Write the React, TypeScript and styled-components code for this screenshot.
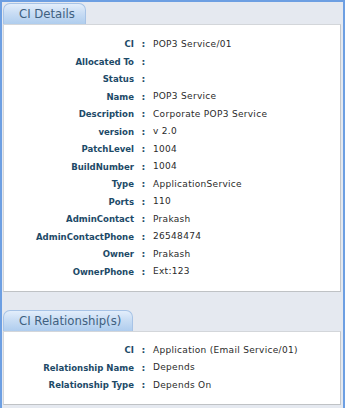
import * as React from 'react';
import styled, {createGlobalStyle} from 'styled-components';

const GlobalStyle = createGlobalStyle`
  html, body {
    margin: 0;
    padding: 0;
    background: #ffffff;
  }
`;

type Field = {label: string; value: string};

const details: Field[] = [
  {label: 'CI', value: 'POP3 Service/01'},
  {label: 'Allocated To', value: ''},
  {label: 'Status', value: ''},
  {label: 'Name', value: 'POP3 Service'},
  {label: 'Description', value: 'Corporate POP3 Service'},
  {label: 'version', value: 'v 2.0'},
  {label: 'PatchLevel', value: '1004'},
  {label: 'BuildNumber', value: '1004'},
  {label: 'Type', value: 'ApplicationService'},
  {label: 'Ports', value: '110'},
  {label: 'AdminContact', value: 'Prakash'},
  {label: 'AdminContactPhone', value: '26548474'},
  {label: 'Owner', value: 'Prakash'},
  {label: 'OwnerPhone', value: 'Ext:123'},
];

const relationships: Field[] = [
  {label: 'CI', value: 'Application (Email Service/01)'},
  {label: 'Relationship Name', value: 'Depends'},
  {label: 'Relationship Type', value: 'Depends On'},
];

const Frame = styled.div`
  box-sizing: border-box;
  width: 345px;
  height: 408px;
  background: #e5e9f0;
  border: 2px solid #6d9fe2;
  border-bottom: none;
  padding: 1px 1px 0 1px;
  display: flex;
  flex-direction: column;
  font-family: 'DejaVu Sans', Verdana, sans-serif;
`;

const Section = styled.section<{$gap?: number}>`
  display: flex;
  flex-direction: column;
  margin-top: ${({$gap}) => $gap ?? 0}px;
`;

const Tab = styled.div<{$width: number}>`
  box-sizing: border-box;
  width: ${({$width}) => $width}px;
  height: 21px;
  border: 1px solid #a7c3e6;
  border-bottom: none;
  border-radius: 7px 7px 0 0;
  background: linear-gradient(#e3eefb 0%, #c9ddf4 45%, #afcdee 100%);
  color: #3f607f;
  font-size: 11.7px;
  line-height: 21px;
  padding-left: 15px;
  white-space: nowrap;
`;

const Panel = styled.div<{$top: number; $bottom: number}>`
  background: #ffffff;
  border: 1px solid #d3d6da;
  border-right-color: #c4c7cb;
  border-bottom-color: #bfc2c5;
  margin-right: 1px;
  padding: ${({$top}) => $top}px 0 ${({$bottom}) => $bottom}px 0;
  display: grid;
  grid-template-columns: 130px 19px 1fr;
  grid-auto-rows: 17.5px;
  align-items: center;
`;

const Label = styled.div`
  text-align: right;
  font-family: 'DejaVu Sans Condensed', 'DejaVu Sans', sans-serif;
  font-weight: bold;
  font-size: 9.5px;
  color: #1d4a68;
  white-space: nowrap;
`;

const Colon = styled.div`
  text-align: center;
  font-weight: bold;
  font-size: 9.5px;
  color: #1d4a68;
`;

const Value = styled.div`
  font-size: 9px;
  color: #2a2a2a;
  letter-spacing: 0.3px;
  white-space: nowrap;
`;

const FieldRows = ({fields}: {fields: Field[]}) => (
  <>
    {fields.map((f, i) => (
      <React.Fragment key={i}>
        <Label>{f.label}</Label>
        <Colon>:</Colon>
        <Value>{f.value}</Value>
      </React.Fragment>
    ))}
  </>
);

export default function App() {
  return (
    <>
      <GlobalStyle />
      <Frame>
        <Section>
          <Tab $width={83}>CI Details</Tab>
          <Panel $top={10} $bottom={11}>
            <FieldRows fields={details} />
          </Panel>
        </Section>
        <Section $gap={18}>
          <Tab $width={130}>CI Relationship(s)</Tab>
          <Panel $top={9} $bottom={10}>
            <FieldRows fields={relationships} />
          </Panel>
        </Section>
      </Frame>
    </>
  );
}
